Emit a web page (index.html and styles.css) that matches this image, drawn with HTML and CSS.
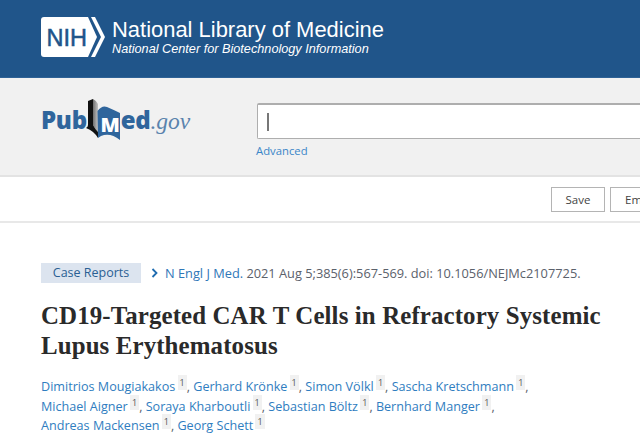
FILE: index.html
```html
<!DOCTYPE html>
<html lang="en">
<head>
<meta charset="utf-8">
<title>PubMed</title>
<link rel="stylesheet" href="styles.css">
</head>
<body>
<header class="nih-bar">
  <svg class="nih-logo" width="65" height="41" viewBox="0 0 65 41" aria-hidden="true">
    <path class="logo-fill" d="M3 0H47L56 20L47 40H3Q0 40 0 37V3Q0 0 3 0Z"/>
    <path class="logo-fill" d="M50 0H54L64 20L54 40H50L60 20Z"/>
    <text class="logo-text" x="5.500" y="29">NIH</text>
  </svg>
  <div class="nih-text">
    <div class="nih-title">National Library of Medicine</div>
    <div class="nih-sub">National Center for Biotechnology Information</div>
  </div>
</header>
<section class="search-band">
  <div class="pubmed-logo">
    <span class="pm-word">Pub</span>
    <svg class="pm-book" width="35" height="44" viewBox="0 0 35 44" aria-hidden="true">
      <defs>
        <linearGradient id="page" x1="0" x2="1" y1="0" y2="0">
          <stop offset="0" stop-color="#6f6f6f"/>
          <stop offset="1" stop-color="#c4c4c4"/>
        </linearGradient>
      </defs>
      <path fill="url(#page)" d="M7 1Q11 3 12 6V34Q9 31 7 27Z"/>
      <path class="book-black" d="M2 3L7 1V27Q9 31 12 34V40Q8 33 0 30Q2 29 2 27Z"/>
      <path class="book-blue" d="M11.500 13Q16 7 21 9Q28 12 34 15V42Q24 34 15 38L12 40Z"/>
      <text class="book-m" x="14.500" y="33.500">M</text>
    </svg>
    <span class="pm-word">ed</span><span class="pm-gov">.gov</span>
  </div>
  <div class="search-col">
    <div class="search-box"><span class="caret"></span></div>
    <a class="advanced">Advanced</a>
  </div>
</section>
<nav class="action-bar">
  <button class="act">Save</button>
  <button class="act act-email">Email</button>
</nav>
<main class="article">
  <div class="cite-row">
    <span class="tag">Case Reports</span>
    <svg class="chev" width="8" height="10" viewBox="0 0 8 10" aria-hidden="true"><path d="M1.500 1L5.500 5L1.500 9"/></svg>
    <span class="cite"><a>N Engl J Med.</a> 2021 Aug 5;385(6):567-569. doi: 10.1056/NEJMc2107725.</span>
  </div>
  <h1 class="title">CD19-Targeted CAR T Cells in Refractory Systemic Lupus Erythematosus</h1>
  <div class="authors">
    <a>Dimitrios Mougiakakos</a> <sup>1</sup>, <a>Gerhard Krönke</a> <sup>1</sup>, <a>Simon Völkl</a> <sup>1</sup>, <a>Sascha Kretschmann</a> <sup>1</sup>,<br>
    <a>Michael Aigner</a> <sup>1</sup>, <a>Soraya Kharboutli</a> <sup>1</sup>, <a>Sebastian Böltz</a> <sup>1</sup>, <a>Bernhard Manger</a> <sup>1</sup>,<br>
    <a>Andreas Mackensen</a> <sup>1</sup>, <a>Georg Schett</a> <sup>1</sup>
  </div>
</main>
</body>
</html>
```
FILE: styles.css
```css
* { box-sizing: border-box; }
html, body { margin: 0; padding: 0; width: 640px; height: 445px; overflow: hidden; background: #fff; }
body { font-family: "Open Sans", "Noto Sans", sans-serif; font-size: 12.800px; color: #5b616b; }

.nih-bar { height: 78px; background: #20558a; display: flex; align-items: flex-start; padding: 17px 0 0 41px; gap: 6px; border-bottom: 1px solid #2f6296; }
.nih-logo { flex: none; }
.logo-fill { fill: #fff; }
.logo-text { font-family: "Liberation Sans", sans-serif; font-size: 23.500px; fill: #20558a; stroke: #20558a; stroke-width: 0.5; }
.nih-text { color: #fff; font-family: "Liberation Sans", sans-serif; }
.nih-title { font-size: 21.950px; line-height: 24px; margin-top: 1px; }
.nih-sub { font-size: 12.700px; font-style: italic; line-height: 14px; }

.search-band { height: 99px; background: #f1f1f1; border-bottom: 2px solid #e3e3e3; display: flex; padding: 20px 0 0 41px; }
.pubmed-logo { width: 216px; flex: none; display: flex; align-items: flex-start; color: #2f659c; height: 44px; }
.pm-word { font-family: "Open Sans", sans-serif; font-weight: 800; font-size: 24px; line-height: 30px; margin-top: 7px; letter-spacing: -0.3px; }
.pm-book { margin-left: -1px; flex: none; }
.book-black { fill: #111; }
.book-blue { fill: #2f659c; }
.book-m { font-family: "Open Sans", sans-serif; font-weight: 800; font-size: 20px; fill: #fff; }
.pm-gov { font-family: "Liberation Serif", serif; font-style: italic; font-size: 23.500px; line-height: 30px; margin-top: 8px; color: #5a83ad; }
.search-col { flex: 1; min-width: 0; padding-top: 5px; }
.search-box { height: 36px; background: #fff; border: 1px solid #aeaeae; border-right: 0; border-top-width: 2px; border-radius: 2px 0 0 2px; padding: 8px 0 0 9px; }
.caret { display: block; width: 2px; height: 18px; background: #777; }
.advanced { display: block; color: #3a86c8; font-size: 11.300px; line-height: 16px; margin: 4px 0 0 -1px; }

.action-bar { height: 46px; border-bottom: 2px solid #e8e8e8; display: flex; gap: 5px; padding: 10px 0 0 551px; }
.act { flex: none; width: 54px; height: 25px; background: #fff; border: 1px solid #b4b4b4; font: 11.500px "Open Sans", sans-serif; color: #444; padding: 0; }
.act-email { text-align: left; padding-left: 14px; }

.article { padding: 40px 0 0 41px; }
.cite-row { display: flex; align-items: center; height: 20px; white-space: nowrap; }
.tag { width: 100px; height: 20px; background: #dce4ef; color: #2a5f93; font-size: 12.500px; line-height: 20px; text-align: center; }
.chev { margin: 0 6px 0 10px; flex: none; }
.chev path { fill: none; stroke: #1f6cb0; stroke-width: 1.800; }
.cite { color: #5b616b; }
.cite a { color: #2f77b8; }
.title { margin: 18px 0 0; width: 575px; font-family: "Liberation Serif", serif; font-weight: 700; font-size: 24.900px; line-height: 30px; color: #2a2a2a; letter-spacing: 0.120px; }
.authors { margin-top: 16px; font-size: 12.600px; line-height: 19.600px; color: #5b616b; white-space: nowrap; }
.authors a { color: #2f7dc0; }
.authors sup { font-size: 9px; line-height: 0; background: #f1f1f1; color: #555; padding: 1px 2px; margin-left: -1px; vertical-align: 5px; }
```
